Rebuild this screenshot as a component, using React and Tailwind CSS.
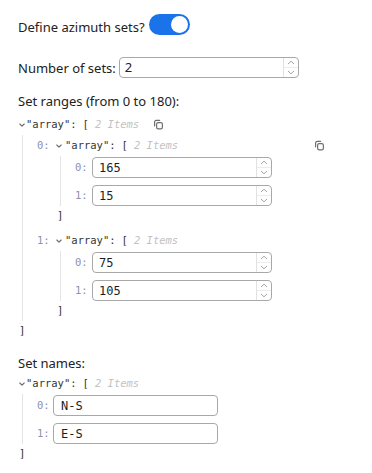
import React from "react";

const MONO = "font-['DejaVu_Sans_Mono',monospace]";

function Chevron() {
  return (
    <svg width="8" height="8" viewBox="0 0 8 8" fill="none" stroke="#6b6b6b" strokeWidth="1.1" strokeLinecap="round" strokeLinejoin="round">
      <path d="M1.8 3 L4 5.2 L6.2 3" />
    </svg>
  );
}

function CopyIcon() {
  return (
    <svg width="11" height="11" viewBox="0 0 11 11" fill="none" stroke="#6e6e6e" strokeWidth="1.2" strokeLinejoin="round">
      <rect x="3.6" y="3.6" width="5.8" height="6.2" rx="1.6" />
      <path d="M1.6 6.8 V3 A1.6 1.6 0 0 1 3.2 1.4 H6.6" strokeLinecap="round" />
    </svg>
  );
}

function Spinner() {
  return (
    <div className="flex h-full w-[15px] flex-col border-l border-[#e2e2e2]">
      <div className="flex flex-1 items-center justify-center border-b border-[#ececec]">
        <svg width="8" height="5" viewBox="0 0 8 5" fill="none" stroke="#9a9a9a" strokeWidth="0.9">
          <path d="M1 4 L4 1.2 L7 4" />
        </svg>
      </div>
      <div className="flex flex-1 items-center justify-center">
        <svg width="8" height="5" viewBox="0 0 8 5" fill="none" stroke="#9a9a9a" strokeWidth="0.9">
          <path d="M1 1 L4 3.8 L7 1" />
        </svg>
      </div>
    </div>
  );
}

function NumInput({ value }) {
  return (
    <div className="flex h-[21px] w-[180px] items-center rounded-[4px] border border-[#a8a8a8] bg-white">
      <span className={`flex-1 pl-[6px] text-[12px] leading-none text-[#1e1e1e] ${MONO}`}>{value}</span>
      <Spinner />
    </div>
  );
}

function TextInput({ value }) {
  return (
    <div className="flex h-[21px] w-[165px] items-center rounded-[4px] border border-[#a8a8a8] bg-white">
      <span className={`pl-[7px] text-[12px] leading-none text-[#1e1e1e] ${MONO}`}>{value}</span>
    </div>
  );
}

function ArrayHead({ count = 2 }) {
  return (
    <>
      <span className="text-[#333]">"array"</span>
      <span className="text-[#333]">:</span>
      <span className="ml-[6px] text-[#333]">[</span>
      <span className="ml-[6px] italic text-[#c2c2c2]">{count} Items</span>
    </>
  );
}

function Key({ k, w }) {
  return <span className={`${w} shrink-0 text-[#8f90ad]`}>{k}:</span>;
}

function ChildArray({ idx, values, showCopy }) {
  return (
    <div className="flex flex-col">
      <div className="flex h-[21px] w-[288px] items-center">
        <Key k={idx} w="w-[18px]" />
        <span className="flex w-[10px] shrink-0 items-center"><Chevron /></span>
        <ArrayHead />
        {showCopy && (
          <span className="ml-auto flex items-center"><CopyIcon /></span>
        )}
      </div>
      <div className="ml-[23px] flex flex-col gap-[7px] border-l border-[#e4e4e4] pl-[14px] pt-[1px]">
        {values.map((v, i) => (
          <div key={i} className="flex items-center">
            <Key k={i} w="w-[17px]" />
            <NumInput value={v} />
          </div>
        ))}
      </div>
      <div className="ml-[20px] flex h-[20px] items-center text-[#333]">]</div>
    </div>
  );
}

export default function App() {
  return (
    <div className="min-h-screen bg-white pl-[18px] pt-[17px] font-['Noto_Sans',sans-serif] text-[13px] text-[#222]">
      {/* Row 1 */}
      <div className="flex h-[20px] items-start gap-[4px]">
        <span className="leading-[20px]">Define azimuth sets?</span>
        <div className="-mt-[3px] flex h-[21px] w-[41px] items-center justify-end rounded-full bg-[#1a73e8] pr-[2px]">
          <div className="h-[17px] w-[17px] rounded-full bg-white" />
        </div>
      </div>

      {/* Row 2 */}
      <div className="mt-[20px] flex h-[21px] items-center gap-[3px]">
        <span className="leading-[20px]">Number of sets:</span>
        <div className="flex h-[21px] w-[180px] items-center rounded-[4px] border border-[#a8a8a8] bg-white">
          <span className="flex-1 pl-[5px] text-[13px] leading-none">2</span>
          <Spinner />
        </div>
      </div>

      {/* Row 3 */}
      <div className="mt-[13px] leading-[20px]">Set ranges (from 0 to 180):</div>

      <div className={`mt-[3px] text-[10.5px] ${MONO}`}>
        <div className="flex h-[21px] items-center">
          <span className="flex w-[8px] shrink-0 items-center"><Chevron /></span>
          <ArrayHead />
          <span className="ml-[14px] flex items-center"><CopyIcon /></span>
        </div>
        <div className="ml-[4px] flex flex-col gap-[4px] border-l border-[#e4e4e4] pl-[14px]">
          <ChildArray idx={0} values={["165", "15"]} showCopy />
          <ChildArray idx={1} values={["75", "105"]} />
        </div>
        <div className="ml-[1px] flex h-[20px] items-center text-[#333]">]</div>
      </div>

      {/* Set names */}
      <div className="mt-[12px] leading-[20px]">Set names:</div>
      <div className={`text-[10.5px] ${MONO}`}>
        <div className="flex h-[21px] items-center">
          <span className="flex w-[8px] shrink-0 items-center"><Chevron /></span>
          <ArrayHead />
        </div>
        <div className="ml-[4px] flex flex-col gap-[7px] border-l border-[#e4e4e4] pl-[14px] pt-[1px]">
          {["N-S", "E-S"].map((v, i) => (
            <div key={i} className="flex items-center">
              <Key k={i} w="w-[16px]" />
              <TextInput value={v} />
            </div>
          ))}
        </div>
        <div className="ml-[1px] flex h-[20px] items-center text-[#333]">]</div>
      </div>
    </div>
  );
}
